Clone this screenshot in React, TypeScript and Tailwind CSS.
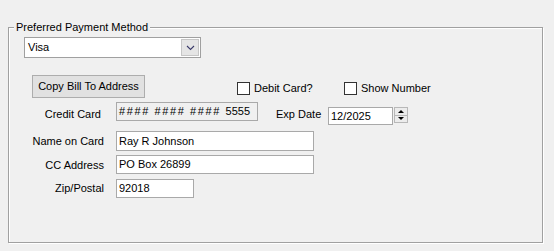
import React from "react";

const Field = ({
  w,
  h,
  children,
  readOnly = false,
  pt = 0,
}: {
  w: string;
  h: string;
  children: React.ReactNode;
  readOnly?: boolean;
  pt?: number;
}) => (
  <div
    className={`${w} ${h} border border-[#a9a9a9] ${readOnly ? "bg-[#f0f0f0]" : "bg-white"} pl-[2px] flex items-center whitespace-nowrap overflow-hidden`}
  >
    <span style={{ marginTop: pt }}>{children}</span>
  </div>
);

const Check = ({ label }: { label: string }) => (
  <div className="flex items-center">
    <div className="w-[13px] h-[13px] border border-[#333] bg-white" />
    <span className="ml-[4px] leading-[13px]">{label}</span>
  </div>
);

export default function App() {
  return (
    <div className="w-[554px] h-[251px] bg-[#f0f0f0] pt-[21px] pl-[8px] text-[11px] text-black font-['Liberation_Sans',Arial,sans-serif] overflow-hidden">
      <fieldset className="w-[535px] h-[222px] m-0 p-0 border border-[#a0a0a0] shadow-[inset_1px_1px_0_#fff,1px_1px_0_#fff]">
        <legend className="ml-[5px] px-[2px] leading-[12px] bg-[#f0f0f0]">
          Preferred Payment Method
        </legend>

        {/* combo */}
        <div className="mt-[4px] ml-[15px] w-[177px] h-[21px] border border-[#a0a0a0] bg-white flex items-center justify-between">
          <span className="pl-[3px]">Visa</span>
          <div className="mr-[1px] w-[18px] h-[17px] bg-[#e5e5e5] border border-[#c6c6c6] flex items-center justify-center">
            <svg width="9" height="6" viewBox="0 0 9 6">
              <polyline
                points="1,1 4.5,4.5 8,1"
                fill="none"
                stroke="#3a3a6a"
                strokeWidth="1.1"
              />
            </svg>
          </div>
        </div>

        {/* button + checkboxes */}
        <div className="mt-[17px] flex items-start">
          <button className="ml-[23px] w-[113px] h-[23px] bg-[#e1e1e1] border border-[#adadad] flex items-center justify-center leading-none">
            Copy Bill To Address
          </button>
          <div className="ml-[92px] mt-[7px] w-[107px]">
            <Check label="Debit Card?" />
          </div>
          <div className="mt-[7px]">
            <Check label="Show Number" />
          </div>
        </div>

        {/* credit card row */}
        <div className="mt-[4px] flex items-start">
          <div className="w-[95px] h-[19px] text-right pr-[3px] leading-[19px] pt-[3px]">
            Credit Card
          </div>
          <div className="ml-[12px]">
            <Field w="w-[142px]" h="h-[19px]" readOnly pt={-1}>
              <span className="tracking-[1.6px]">#### #### #### </span>
              5555
            </Field>
          </div>
          <div className="ml-[18px] w-[52px] h-[19px] leading-[19px] pt-[3px] whitespace-nowrap">
            Exp Date
          </div>
          <div className="mt-[5px] flex items-start">
            <Field w="w-[65px]" h="h-[18px]" pt={1}>
              12/2025
            </Field>
            <div className="ml-[1px] w-[14px] h-[16px] flex flex-col border border-[#b8b8b8] bg-[#ececec]">
              <div className="flex-1 flex items-center justify-center border-b border-[#b8b8b8]">
                <div className="w-0 h-0 border-l-[3px] border-r-[3px] border-b-[3px] border-l-transparent border-r-transparent border-b-black" />
              </div>
              <div className="flex-1 flex items-center justify-center">
                <div className="w-0 h-0 border-l-[3px] border-r-[3px] border-t-[3px] border-l-transparent border-r-transparent border-t-black" />
              </div>
            </div>
          </div>
        </div>

        {/* name */}
        <div className="mt-[6px] flex items-start">
          <div className="w-[95px] h-[20px] text-right leading-[20px]">Name on Card</div>
          <div className="ml-[12px]">
            <Field w="w-[198px]" h="h-[20px]">Ray R Johnson</Field>
          </div>
        </div>

        {/* cc address */}
        <div className="mt-[4px] flex items-start">
          <div className="w-[95px] h-[19px] text-right leading-[19px] pt-[1px]">CC Address</div>
          <div className="ml-[12px]">
            <Field w="w-[198px]" h="h-[19px]">PO Box 26899</Field>
          </div>
        </div>

        {/* zip */}
        <div className="mt-[5px] flex items-start">
          <div className="w-[95px] h-[19px] text-right leading-[19px]">Zip/Postal</div>
          <div className="ml-[12px]">
            <Field w="w-[78px]" h="h-[19px]" pt={-1}>
              92018
            </Field>
          </div>
        </div>
      </fieldset>
    </div>
  );
}
